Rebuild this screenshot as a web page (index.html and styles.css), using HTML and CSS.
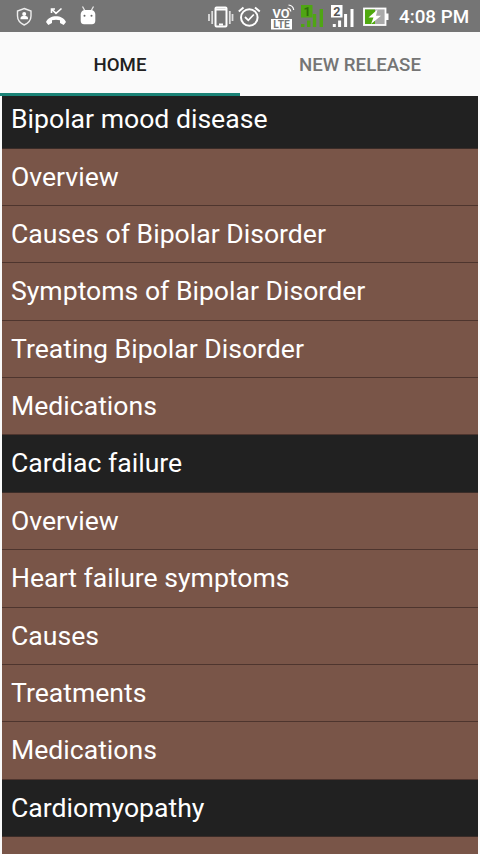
FILE: index.html
```html
<!DOCTYPE html>
<html lang="en">
<head>
    <meta charset="UTF-8">
    <meta name="viewport" content="width=device-width, initial-scale=1.0">
    <title>Home</title>
    <link rel="stylesheet" href="styles.css">
</head>
<body>

<!-- Status Bar -->
<div class="status-bar">
    <svg class="status-icons" width="390" height="32" viewBox="0 0 390 32">
        <!-- shield -->
        <path d="M24.200 8.500 L31 11 V16 C31 20.500 28.500 23 24.200 25 C20 23 17.500 20.500 17.500 16 V11 Z" fill="none" stroke="#eee" stroke-width="1.400"/>
        <circle cx="24.200" cy="14" r="2" fill="#fff"/>
        <path d="M20.500 19.300 V18 Q20.500 16.500 22.500 16 H26 Q28 16.500 28 18 V19.300 Z" fill="#fff"/>
        <!-- missed call -->
        <path d="M51.500 13 V9 H55 M51.500 9 L56 13.300 L61.500 8.500" fill="none" stroke="#fff" stroke-width="1.600"/>
        <path d="M46 22 C47.500 18 52 16.200 56 16.200 C60 16.200 64.500 18 66 22 L63.700 25 L60 23 V20.300 Q56 19.200 52 20.300 V23 L48.300 25 Z" fill="#fff"/>
        <!-- android head -->
        <path d="M82.500 6.500 L85 11 M93.500 6.500 L91 11" stroke="#e8e8e8" stroke-width="1.300"/>
        <path d="M80.700 14 Q81.500 10 85 10 H91 Q94.500 10 95.300 14 V21 Q95 24.300 92 24.300 H84 Q81 24.300 80.700 21 Z" fill="#fff"/>
        <circle cx="84.500" cy="15.800" r="1" fill="#666"/>
        <circle cx="91.500" cy="15.800" r="1" fill="#666"/>
        <!-- vibrate -->
        <rect x="215.500" y="7.500" width="11" height="19" rx="1" fill="none" stroke="#fff" stroke-width="2"/>
        <path d="M216 9.500 H226 M219 24.500 H223" stroke="#fff" stroke-width="1.800"/>
        <path d="M212.200 11 V24 M209 14 V21 M229.800 11 V24 M232.500 14 V21" stroke="#ddd" stroke-width="1.800"/>
        <!-- alarm -->
        <circle cx="249.300" cy="17.500" r="8.300" fill="none" stroke="#fff" stroke-width="2"/>
        <path d="M238.800 11.500 L243.500 7.500 M255 7.500 L259.800 11.500" stroke="#fff" stroke-width="2"/>
        <path d="M245 17 L248.300 20.300 L253.800 14.500" fill="none" stroke="#fff" stroke-width="1.800"/>
        <!-- volte -->
        <text x="272.500" y="17.500" font-size="12.500" font-weight="700" textLength="17" lengthAdjust="spacingAndGlyphs" fill="#fff">VO</text>
        <path d="M287.500 8 Q290.500 8.500 290.800 11.500 M288.500 5 Q293.200 5.500 293.700 10" fill="none" stroke="#fff" stroke-width="1.200"/>
        <rect x="271" y="19" width="21" height="10.500" fill="#fff"/>
        <text x="273.300" y="28" font-size="10" font-weight="700" textLength="16.500" lengthAdjust="spacingAndGlyphs" fill="#777">LTE</text>
        <!-- sim 1 -->
        <rect x="301" y="5" width="11.500" height="12.500" fill="#4fa514"/>
        <text x="303.500" y="15.800" font-size="12.500" font-weight="700" fill="#2f6c0c">1</text>
        <path d="M302.700 24 V27 M308.700 20.500 V27 M314.500 14 V27 M321.300 9 V27" stroke="#4fa514" stroke-width="3.400"/>
        <!-- sim 2 -->
        <rect x="331" y="5" width="11.500" height="12.500" fill="#fff"/>
        <text x="333.200" y="15.800" font-size="12.500" font-weight="700" fill="#555">2</text>
        <path d="M334.300 24 V27 M339.600 20.500 V27 M345.600 14 V27 M352 9 V27" stroke="#fff" stroke-width="3"/>
        <!-- battery -->
        <rect x="364" y="8.500" width="21.500" height="16.500" fill="#aaa" stroke="#fff" stroke-width="1.800"/>
        <rect x="365" y="9.500" width="10" height="14.500" fill="#4fa80f"/>
        <rect x="386" y="13.500" width="2.500" height="6.500" fill="#fff"/>
        <path d="M377.500 9.500 L368.500 17.500 H373.500 L371 24 L381 15.800 H376 Z" fill="#fff"/>
    </svg>
    <span class="clock">4:08 PM</span>
</div>

<!-- Tabs -->
<div class="tabs">
    <div class="tab active">HOME</div>
    <div class="tab">NEW RELEASE</div>
</div>

<!-- Topic List -->
<div class="list">
    <div class="row header first">Bipolar mood disease</div>
    <div class="row">Overview</div>
    <div class="row">Causes of Bipolar Disorder</div>
    <div class="row">Symptoms of Bipolar Disorder</div>
    <div class="row">Treating Bipolar Disorder</div>
    <div class="row">Medications</div>
    <div class="row header">Cardiac failure</div>
    <div class="row">Overview</div>
    <div class="row">Heart failure symptoms</div>
    <div class="row">Causes</div>
    <div class="row">Treatments</div>
    <div class="row">Medications</div>
    <div class="row header">Cardiomyopathy</div>
    <div class="row"></div>
</div>

</body>
</html>
```
FILE: styles.css
```css
* {
    box-sizing: border-box;
}
body {
    font-family: Roboto, sans-serif;
    display: flex;
    flex-direction: column;
    height: 854px;
    margin: 0;
    overflow: hidden;
    background-color: #fafafa;
}
.status-bar {
    display: flex;
    flex: none;
    height: 32px;
    background-color: #757575;
    color: #fff;
}
.status-icons {
    flex: none;
}
.clock {
    padding-left: 9px;
    font-size: 18.8px;
    font-weight: 500;
    line-height: 35px;
    white-space: nowrap;
}
.tabs {
    display: flex;
    flex: none;
    height: 64px;
}
.tab {
    flex: 1;
    border-bottom: 3px solid transparent;
    color: #757575;
    font-size: 18.67px;
    font-weight: 500;
    line-height: 66px;
    text-align: center;
}
.tab.active {
    border-bottom-color: #1b8377;
    color: #212121;
}
.list {
    flex: 1;
    margin: 0 2px;
    overflow: hidden;
}
.row {
    height: 57.4px;
    padding-left: 9px;
    border-bottom: 1px solid #4e352e;
    background-color: #795548;
    color: #fff;
    font-size: 26.6px;
    line-height: 55.8px;
    white-space: nowrap;
}
.row.header {
    border-bottom-color: #3a2c28;
    background-color: #212121;
}
.row.first {
    margin-top: -4.9px;
}
```
